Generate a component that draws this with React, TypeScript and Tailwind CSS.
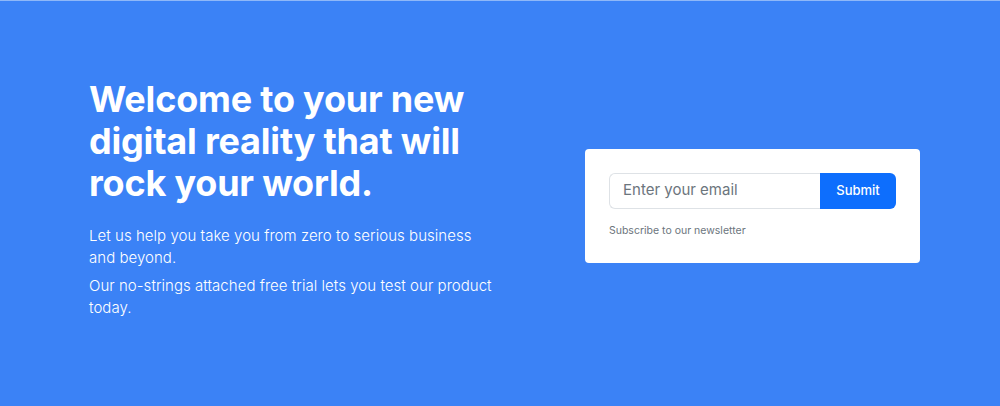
export default function App() {
  return (
    <div
      className="h-[406px] w-full bg-[#3b82f6] border-t border-[#8fb8f8] flex items-center justify-between pl-[89px] pr-[80px]"
      style={{ fontFamily: 'Inter, "Noto Sans", sans-serif' }}
    >
      {/* Left copy */}
      <div className="w-[412px] text-white -mt-[10px]">
        <h1 className="text-[36px] leading-[42px] font-bold tracking-[-0.2px]">
          Welcome to your new digital reality that will rock your world.
        </h1>
        <p className="mt-[21px] max-w-[390px] text-[15px] leading-[22px] font-light tracking-[0.04px]">
          Let us help you take you from zero to serious business and beyond.
        </p>
        <p className="mt-[6px] text-[15px] leading-[22px] font-light tracking-[0.04px]">
          Our no-strings attached free trial lets you test our product today.
        </p>
      </div>

      {/* Newsletter card */}
      <div className="w-[335px] bg-white rounded-[4px] p-6 mt-[4px]">
        <div className="flex h-[36px]">
          <input
            placeholder="Enter your email"
            className="flex-1 min-w-0 border border-[#dee2e6] border-r-0 rounded-l-[6px] px-[13px] text-[15px] text-[#212529] placeholder:text-[#6c757d] outline-none"
          />
          <button className="w-[76px] bg-[#0d6efd] text-white text-[13px] font-medium rounded-r-[6px]">
            Submit
          </button>
        </div>
        <p className="mt-[14px] text-[10.5px] leading-[16px] text-[#6c757d]">Subscribe to our newsletter</p>
      </div>
    </div>
  );
}
